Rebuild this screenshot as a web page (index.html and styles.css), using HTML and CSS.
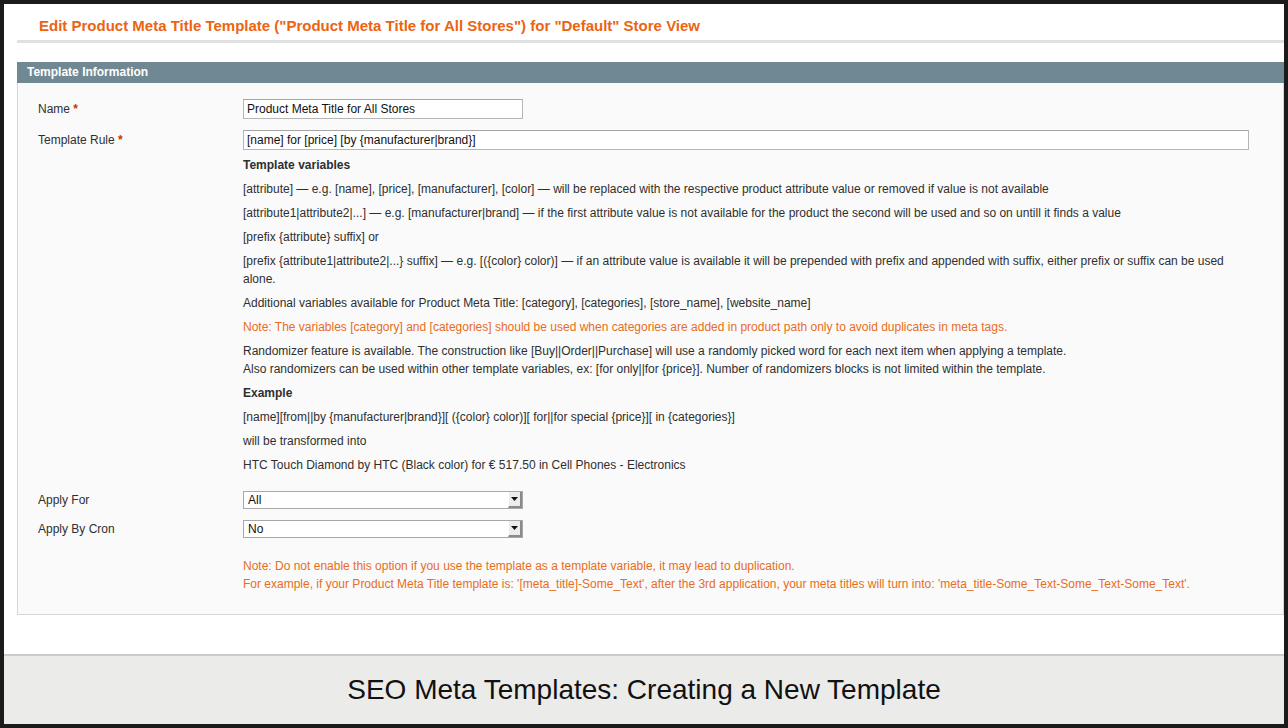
FILE: index.html
```html
<!DOCTYPE html>
<html lang="en">
<head>
    <meta charset="UTF-8">
    <title>Edit Product Meta Title Template</title>
    <link rel="stylesheet" href="styles.css">
</head>
<body>
    <div class="screen">
        <div class="page">
            <div class="content-header">
                <h3>Edit Product Meta Title Template ("Product Meta Title for All Stores") for "Default" Store View</h3>
            </div>

            <div class="entry-edit-head">Template Information</div>
            <div class="fieldset">
                <div class="row">
                    <label class="label">Name <span class="required">*</span></label>
                    <div class="value"><input class="input-text short" type="text" value="Product Meta Title for All Stores"></div>
                </div>
                <div class="row">
                    <label class="label">Template Rule <span class="required">*</span></label>
                    <div class="value">
                        <input class="input-text wide" type="text" value="[name] for [price] [by {manufacturer|brand}]">
                        <div class="help">
                            <p><strong>Template variables</strong></p>
                            <p>[attribute] — e.g. [name], [price], [manufacturer], [color] — will be replaced with the respective product attribute value or removed if value is not available</p>
                            <p>[attribute1|attribute2|...] — e.g. [manufacturer|brand] — if the first attribute value is not available for the product the second will be used and so on untill it finds a value</p>
                            <p>[prefix {attribute} suffix] or</p>
                            <p>[prefix {attribute1|attribute2|...} suffix] — e.g. [({color} color)] — if an attribute value is available it will be prepended with prefix and appended with suffix, either prefix or suffix can be used alone.</p>
                            <p>Additional variables available for Product Meta Title: [category], [categories], [store_name], [website_name]</p>
                            <p class="note">Note: The variables [category] and [categories] should be used when categories are added in product path only to avoid duplicates in meta tags.</p>
                            <p>Randomizer feature is available. The construction like [Buy||Order||Purchase] will use a randomly picked word for each next item when applying a template.<br>Also randomizers can be used within other template variables, ex: [for only||for {price}]. Number of randomizers blocks is not limited within the template.</p>
                            <p><strong>Example</strong></p>
                            <p>[name][from||by {manufacturer|brand}][ ({color} color)][ for||for special {price}][ in {categories}]</p>
                            <p>will be transformed into</p>
                            <p>HTC Touch Diamond by HTC (Black color) for € 517.50 in Cell Phones - Electronics</p>
                        </div>
                    </div>
                </div>
                <div class="row row-select first-select">
                    <label class="label">Apply For</label>
                    <div class="value">
                        <div class="select">
                            <span>All</span>
                            <span class="arrow"><svg width="7" height="4" viewBox="0 0 7 4"><path d="M0 0h7L3.5 4z" fill="#111"/></svg></span>
                        </div>
                    </div>
                </div>
                <div class="row row-select">
                    <label class="label">Apply By Cron</label>
                    <div class="value">
                        <div class="select">
                            <span>No</span>
                            <span class="arrow"><svg width="7" height="4" viewBox="0 0 7 4"><path d="M0 0h7L3.5 4z" fill="#111"/></svg></span>
                        </div>
                        <p class="note cron-note">Note: Do not enable this option if you use the template as a template variable, it may lead to duplication.<br>For example, if your Product Meta Title template is: '[meta_title]-Some_Text', after the 3rd application, your meta titles will turn into: 'meta_title-Some_Text-Some_Text-Some_Text'.</p>
                    </div>
                </div>
            </div>
        </div>

        <div class="caption">SEO Meta Templates: Creating a New Template</div>
    </div>
</body>
</html>
```

FILE: styles.css
```css
html, body {
    margin: 0;
    padding: 0;
}
body {
    background: #1b1b1b;
    font-family: "Liberation Sans", Arial, sans-serif;
    font-size: 12px;
    color: #2f2f2f;
}
.screen {
    margin: 4px;
    height: 720px;
    display: flex;
    flex-direction: column;
    background: #fff;
    overflow: hidden;
}
.page {
    flex: 1;
    padding-left: 13px;
}
.content-header {
    height: 36px;
    border-bottom: 3px solid #e1e1e1;
    padding-left: 22px;
}
.content-header h3 {
    margin: 0;
    padding-top: 13px;
    font-size: 15px;
    line-height: 17px;
    color: #eb6414;
    font-weight: bold;
}
.entry-edit-head {
    margin-top: 19px;
    height: 21px;
    line-height: 20px;
    background: #6f8893;
    color: #fff;
    font-weight: bold;
    padding-left: 10px;
}
.fieldset {
    background: #fafafa;
    border: 1px solid #d6d6d6;
    border-top: none;
    padding: 16px 0 21px 20px;
}
.row {
    display: flex;
    margin-bottom: 11px;
}
.row:last-child {
    margin-bottom: 0;
}
.label {
    width: 205px;
    flex: none;
    line-height: 20px;
}
.required {
    color: #c30;
    font-weight: bold;
}
.value {
    width: 1005px;
}
.input-text {
    box-sizing: border-box;
    height: 20px;
    border: 1px solid #b6b6b6;
    border-top-color: #a6a6a6;
    background: #fff;
    padding: 0 3px;
    margin: 0;
    font-family: "Liberation Sans", Arial, sans-serif;
    font-size: 12px;
    color: #111;
}
.short {
    width: 280px;
}
.wide {
    width: 1006px;
}
.help {
    margin-top: 6px;
}
.help p {
    margin: 0 0 6px;
    line-height: 18px;
}
.note {
    color: #e86d1c;
}
.first-select {
    margin-top: 11px;
}
.row-select .label {
    line-height: 18px;
}
.select {
    box-sizing: border-box;
    width: 280px;
    height: 18px;
    border: 1px solid #a8a8a8;
    background: #fff;
    display: flex;
    align-items: center;
    justify-content: space-between;
    padding-left: 4px;
    color: #111;
}
.arrow {
    box-sizing: border-box;
    width: 14px;
    height: 16px;
    display: flex;
    align-items: center;
    justify-content: center;
    background: #ececec;
    border-right: 2px solid #8a8a8a;
    border-bottom: 2px solid #8a8a8a;
    border-left: 1px solid #fff;
}
.cron-note {
    margin: 19px 0 0;
    line-height: 18px;
}
.caption {
    height: 68px;
    border-top: 2px solid #cbcbcb;
    background: #ebebe9;
    display: flex;
    align-items: center;
    justify-content: center;
    font-family: "Liberation Sans", Arial, sans-serif;
    font-size: 28px;
    color: #111;
}
```
